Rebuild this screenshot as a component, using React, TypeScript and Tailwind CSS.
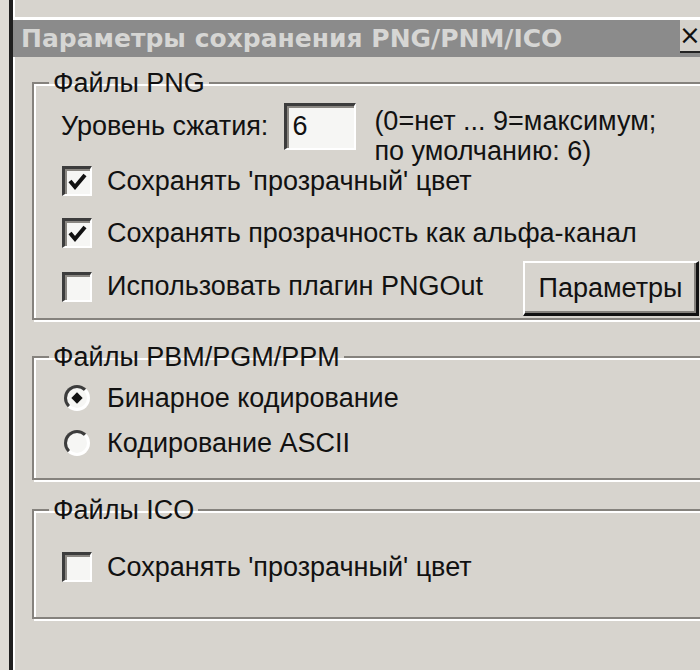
const font = "font-['Liberation_Sans',Arial,sans-serif]";

function CheckBox({ checked }: { checked?: boolean }) {
  return (
    <div className="w-[30px] h-[30px] shrink-0 border-t-[3px] border-l-[3px] border-b-[2px] border-r-[2px] border-t-[#3c3c3c] border-l-[#3c3c3c] border-b-white border-r-white bg-[#f6f6f4] shadow-[inset_2px_2px_0_#8a8782]">
      {checked && (
        <svg viewBox="0 0 25 25" className="w-full h-full">
          <path d="M5 12 L10 18 L20 6" fill="none" stroke="#111" strokeWidth="4" />
        </svg>
      )}
    </div>
  );
}

function Radio({ checked }: { checked?: boolean }) {
  return (
    <div className="w-[26px] h-[26px] shrink-0 rounded-full border-[3px] border-t-[#3c3c3c] border-l-[#3c3c3c] border-b-white border-r-white bg-[#f6f6f4] flex items-center justify-center">
      {checked && <div className="w-[8px] h-[8px] bg-[#111] rotate-45" />}
    </div>
  );
}

function Group({ title, className, children }: { title: string; className: string; children: React.ReactNode }) {
  return (
    <fieldset
      className={`ml-[19px] mr-[-4px] border-2 border-[#85827d] shadow-[2px_2px_0_#fff,inset_2px_2px_0_#fff] ${className}`}
    >
      <legend className="ml-[15px] px-[4px] text-[27px] leading-[30px] text-[#111]">{title}</legend>
      {children}
    </fieldset>
  );
}

export default function App() {
  return (
    <div className={`w-[700px] h-[670px] flex bg-[#d7d4ce] overflow-hidden ${font}`}>
      <div className="w-[9px] bg-[#dedbd5]" />
      <div className="flex-1 flex flex-col border-l-[4px] border-[#1f1f1f] shadow-[inset_2px_0_0_#fff]">
        <div className="mt-[17px] h-[3px] bg-white" />
        <div className="h-[37px] flex items-center justify-between bg-[#8b8b8b]">
          <span className="pl-[8px] font-['DejaVu_Sans',sans-serif] font-bold text-[25px] text-[#d6d6d4]">
            Параметры сохранения PNG/PNM/ICO
          </span>
          <div className="w-[20px] h-[33px] self-start bg-[#d4d1cb] border-b-[2px] border-[#222] flex items-center justify-center text-[26px] text-[#111] font-['DejaVu_Sans',sans-serif]">
            ×
          </div>
        </div>

        <Group title="Файлы PNG" className="mt-[11px] pb-[2px] pr-[3px]">
          <div className="mt-[5px] ml-[27px] flex items-start text-[27px] text-[#111]">
            <span className="h-[47px] leading-[47px]">Уровень сжатия:</span>
            <div className="ml-[16px] w-[72px] h-[47px] border-t-[3px] border-l-[3px] border-b-[2px] border-r-[2px] border-t-[#3c3c3c] border-l-[#3c3c3c] border-b-white border-r-white bg-[#f6f6f4] shadow-[inset_2px_2px_0_#8a8782] pl-[5px] leading-[40px]">
              6
            </div>
            <div className="ml-[18px] mt-[3px] leading-[30px]">
              <div>(0=нет ... 9=максимум;</div>
              <div>по умолчанию: 6)</div>
            </div>
          </div>
          <div className="ml-[28px] flex flex-col text-[27px] text-[#111]">
            <div className="h-[30px] flex items-center gap-[15px]">
              <CheckBox checked />
              <span>Сохранять 'прозрачный' цвет</span>
            </div>
            <div className="mt-[22px] h-[30px] flex items-center gap-[15px]">
              <CheckBox checked />
              <span>Сохранять прозрачность как альфа-канал</span>
            </div>
            <div className="mt-[13px] h-[55px] flex items-center justify-between">
              <div className="flex items-center gap-[15px] mt-[-4px]">
                <CheckBox />
                <span>Использовать плагин PNGOut</span>
              </div>
              <button className="w-[176px] h-[55px] border-t-[2px] border-l-[2px] border-b-[3px] border-r-[3px] border-t-white border-l-white border-b-[#111] border-r-[#111] bg-[#d7d4ce] shadow-[inset_-2px_-2px_0_#85827d] text-[27px] text-[#111]">
                Параметры
              </button>
            </div>
          </div>
        </Group>

        <Group title="Файлы PBM/PGM/PPM" className="mt-[22px] pb-[22px]">
          <div className="ml-[30px] flex flex-col text-[27px] text-[#111]">
            <div className="mt-[13px] h-[26px] flex items-center gap-[17px]">
              <Radio checked />
              <span>Бинарное кодирование</span>
            </div>
            <div className="mt-[19px] h-[26px] flex items-center gap-[17px]">
              <Radio />
              <span>Кодирование ASCII</span>
            </div>
          </div>
        </Group>

        <Group title="Файлы ICO" className="mt-[15px] pb-[35px]">
          <div className="ml-[28px] mt-[27px] h-[30px] flex items-center gap-[15px] text-[27px] text-[#111]">
            <CheckBox />
            <span>Сохранять 'прозрачный' цвет</span>
          </div>
        </Group>
      </div>
    </div>
  );
}
